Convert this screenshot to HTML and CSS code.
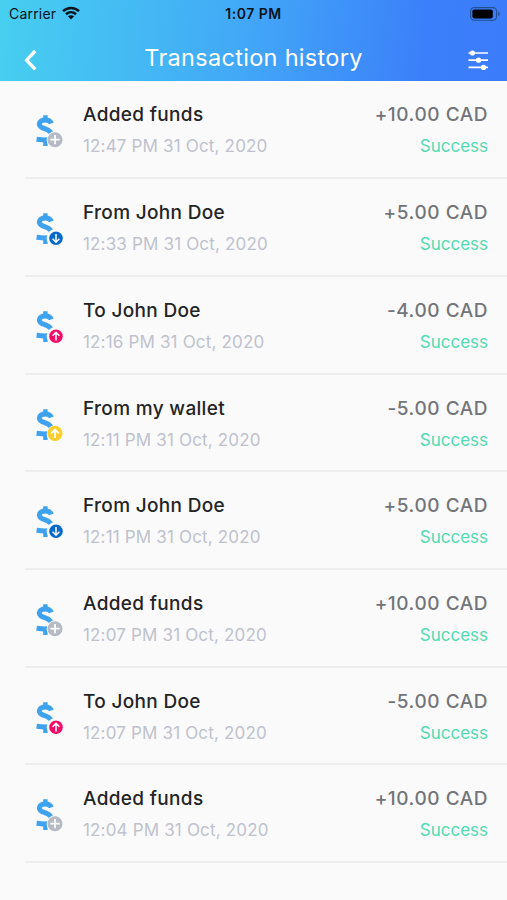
FILE: index.html
```
<!DOCTYPE html>
<html lang="en">
<head>
<meta charset="utf-8">
<title>Transaction history</title>
<link rel="stylesheet" href="styles.css">
</head>
<body>
<svg class="defs" aria-hidden="true">
  <symbol id="dollar" viewBox="0 0 32 36">
    <path d="M17.4 10.4C16.4 7.6 14.2 6.9 11.3 6.9C7.8 6.9 5.3 8.4 5.3 11C5.3 13.7 7.8 14.8 11.3 15.9C15.3 17.2 17.4 18.8 17.4 22C17.4 25.4 14.5 27 11 27C8 27 5.6 26.7 2.6 26.3" fill="none" stroke="#3ea2ef" stroke-width="5"/>
    <path d="M11.4 2.2V6M11.4 27V33" stroke="#3ea2ef" stroke-width="4.4"/>
    <circle cx="21" cy="26.7" r="8.4" fill="#fafafb"/>
  </symbol>
  <symbol id="plus" viewBox="0 0 32 36"><use href="#dollar"/><circle cx="21" cy="26.7" r="7.5" fill="#b5bac4"/><path d="M21 22.1v9.2M16.4 26.7h9.2" stroke="#fff" stroke-width="1.8"/></symbol>
  <symbol id="down" viewBox="0 0 32 36"><use href="#dollar"/><circle cx="22" cy="27.3" r="6.8" fill="#0969cb"/><path d="M22 23v8M18.6 27.8l3.4 3.4 3.4-3.4" fill="none" stroke="#fff" stroke-width="1.5"/></symbol>
  <symbol id="up" viewBox="0 0 32 36"><use href="#dollar"/><circle cx="22" cy="27.3" r="6.8" fill="#f50a68"/><path d="M22 31.6v-8M18.6 26.8l3.4-3.4 3.4 3.4" fill="none" stroke="#fff" stroke-width="1.5"/></symbol>
  <symbol id="wallet" viewBox="0 0 32 36"><use href="#dollar"/><circle cx="21" cy="26.3" r="7.6" fill="#fcce2c"/><path d="M21 31.1v-8.5M17.2 26.4l3.8-3.8 3.8 3.8" fill="none" stroke="#fff" stroke-width="1.8"/></symbol>
</svg>
<header class="header">
  <div class="status">
    <div class="carrier">Carrier
      <svg width="18" height="14" viewBox="0 0 18 14"><g fill="none" stroke="#06131d" stroke-width="2.5"><path d="M1 5.1C5.6.8 12.4.8 17 5.1"/><path d="M4 8.3c3-2.7 7-2.7 10 0"/></g><path d="M5.9 10.3c1.8-1.5 4.4-1.5 6.2 0L9 13.6z" fill="#06131d"/></svg>
    </div>
    <div class="clock">1:07 PM</div>
    <svg class="battery" width="31" height="14" viewBox="0 0 31 14"><rect x=".6" y=".6" width="26" height="12.6" rx="3.6" fill="none" stroke="#234f94" stroke-width="1.1"/><rect x="2.4" y="2.4" width="20.4" height="9" rx="1.8" fill="#000"/><path d="M28.3 4.6c2 .8 2 3.8 0 4.6z" fill="#234f94"/></svg>
  </div>
  <div class="nav">
    <svg width="14" height="22" viewBox="0 0 14 22"><path d="M12.2 2L3.6 11.2l8.6 9.2" fill="none" stroke="#fff" stroke-width="3.3"/></svg>
    <h1 class="title">Transaction history</h1>
    <svg width="21" height="20" viewBox="0 0 21 20"><path d="M.5 3h19.5M.5 10.2h19.5M.5 17.4h19.5" stroke="#fff" stroke-width="1.7"/><g fill="#fff"><circle cx="4.5" cy="3" r="2.6"/><circle cx="10.5" cy="10.2" r="2.6"/><circle cx="15.5" cy="17.4" r="2.6"/></g></svg>
  </div>
</header>
<main class="list">
  <article class="row"><svg class="icon"><use href="#plus"/></svg><div class="info"><div class="name">Added funds</div><div class="date">12:47 PM 31 Oct, 2020</div></div><div class="sum"><div class="amount">+10.00 CAD</div><div class="state">Success</div></div></article>
  <article class="row"><svg class="icon"><use href="#down"/></svg><div class="info"><div class="name">From John Doe</div><div class="date">12:33 PM 31 Oct, 2020</div></div><div class="sum"><div class="amount">+5.00 CAD</div><div class="state">Success</div></div></article>
  <article class="row"><svg class="icon"><use href="#up"/></svg><div class="info"><div class="name">To John Doe</div><div class="date">12:16 PM 31 Oct, 2020</div></div><div class="sum"><div class="amount">-4.00 CAD</div><div class="state">Success</div></div></article>
  <article class="row"><svg class="icon"><use href="#wallet"/></svg><div class="info"><div class="name">From my wallet</div><div class="date">12:11 PM 31 Oct, 2020</div></div><div class="sum"><div class="amount">-5.00 CAD</div><div class="state">Success</div></div></article>
  <article class="row"><svg class="icon"><use href="#down"/></svg><div class="info"><div class="name">From John Doe</div><div class="date">12:11 PM 31 Oct, 2020</div></div><div class="sum"><div class="amount">+5.00 CAD</div><div class="state">Success</div></div></article>
  <article class="row"><svg class="icon"><use href="#plus"/></svg><div class="info"><div class="name">Added funds</div><div class="date">12:07 PM 31 Oct, 2020</div></div><div class="sum"><div class="amount">+10.00 CAD</div><div class="state">Success</div></div></article>
  <article class="row"><svg class="icon"><use href="#up"/></svg><div class="info"><div class="name">To John Doe</div><div class="date">12:07 PM 31 Oct, 2020</div></div><div class="sum"><div class="amount">-5.00 CAD</div><div class="state">Success</div></div></article>
  <article class="row"><svg class="icon"><use href="#plus"/></svg><div class="info"><div class="name">Added funds</div><div class="date">12:04 PM 31 Oct, 2020</div></div><div class="sum"><div class="amount">+10.00 CAD</div><div class="state">Success</div></div></article>
</main>
</body>
</html>
```
FILE: styles.css
```
* { box-sizing: border-box; }
body {
  margin: 0;
  height: 900px;
  overflow: hidden;
  background: #fafafb;
  font-family: Inter, "Liberation Sans", sans-serif;
}
svg { display: block; flex: none; }
.defs { position: absolute; width: 0; height: 0; }
.header {
  height: 81.3px;
  background: linear-gradient(95deg, #47cff0 0%, #42a9f7 47%, #3b7ffa 84%, #3b7cfa 100%);
}
.status {
  height: 27px;
  padding: 0 6px 0 9px;
  display: grid;
  grid-template-columns: 1fr auto 1fr;
  align-items: center;
  color: #06131d;
}
.carrier { display: flex; align-items: center; gap: 6px; font-size: 14px; letter-spacing: .2px; }
.carrier svg { margin-top: -2px; }
.clock { margin-left: -3px; font-size: 14px; font-weight: 600; letter-spacing: .5px; }
.battery { justify-self: end; }
.nav {
  height: 54px;
  padding: 12px 18px 0 23px;
  display: flex;
  align-items: center;
  justify-content: space-between;
}
.title {
  margin: -4px 0 0 2px;
  font-size: 23.5px;
  line-height: 28px;
  font-weight: 400;
  letter-spacing: .3px;
  color: #fff;
}
.list { padding-left: 25px; }
.row {
  height: 97.74px;
  padding: 20px 19px 0 9px;
  display: flex;
  border-bottom: 2px solid #eeeef0;
}
.icon { width: 32px; height: 36px; margin-top: 12px; }
.info { flex: 1; margin-left: 17px; }
.sum { text-align: right; }
.name, .amount { font-size: 19px; line-height: 27px; font-weight: 500; letter-spacing: .33px; white-space: nowrap; }
.name { color: #242426; }
.amount { color: #727579; letter-spacing: .55px; }
.date, .state { margin-top: 6px; font-size: 17px; line-height: 24px; white-space: nowrap; }
.date { color: #bfc2cd; letter-spacing: .17px; }
.state { color: #54dab0; }
```
